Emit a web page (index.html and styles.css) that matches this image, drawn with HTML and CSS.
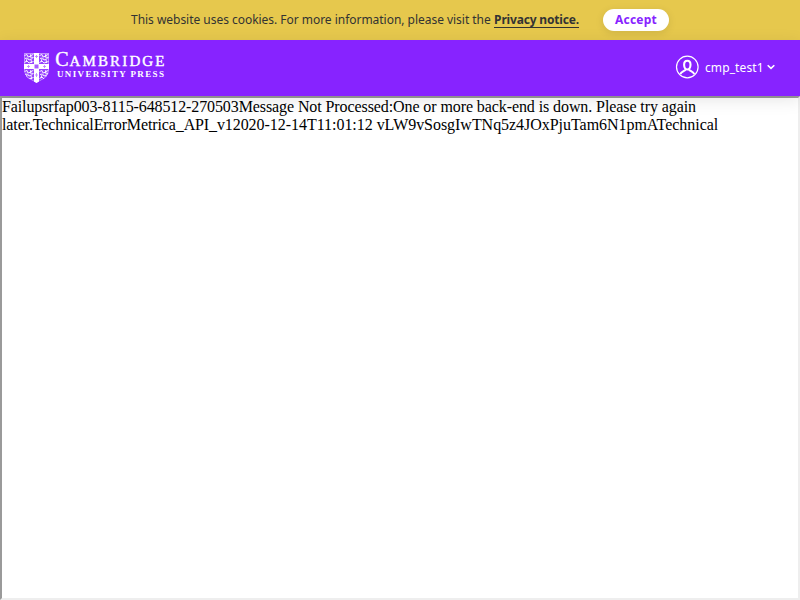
FILE: index.html
```html
<!DOCTYPE html>
<html lang="en">
<head>
<meta charset="utf-8">
<title>Cambridge University Press</title>
<link rel="stylesheet" href="styles.css">
</head>
<body>
<div class="cookie">
  <p class="cookie-text"><span class="cookie-copy">This website uses cookies. For more information, please visit the</span> <a class="notice">Privacy notice.</a></p>
  <button class="accept">Accept</button>
</div>
<header class="header">
  <svg class="logo" width="142" height="40" viewBox="0 -4 142 40">
    <defs>
      <clipPath id="shield"><path d="M0 1H25V18C25 25 18 28 12.5 31C7 28 0 25 0 18Z"/></clipPath>
      <g id="lion" fill="none" stroke="#fff" stroke-width=".9">
        <path d="M.5 2.5L3 1.5L4 4L7 3L9.5 1M1 5.5L3.5 5L5 7L8.5 5.5M.5 9.5L3 8L5 10L9.5 8.500M7 1L6 4L9.500 4.500M3 6L2 9M7 6.500L7.500 10"/>
      </g>
    </defs>
    <g clip-path="url(#shield)">
      <rect width="25" height="32" fill="#fff" opacity=".15"/>
      <use href="#lion" y="1"/><use href="#lion" x="15" y="1"/>
      <use href="#lion" y="17"/><use href="#lion" x="15" y="17"/>
      <path d="M10 0H15V12H25V17H15V32H10V17H0V12H10Z" fill="#fff"/>
      <path d="M12.500 3V6M11 4.500H14M12.500 21V25M11 23H14M3 14.500H6M4.500 13V16M19 14.500H22M20.500 13V16" stroke="#b77aff" stroke-width=".8"/>
      <rect x="10.500" y="12.500" width="4" height="4" fill="#a75cff"/>
      <path d="M.5 1.500H24.500V18C24.500 25 18 27.500 12.500 30.500C7 27.500 .5 25 .5 18Z" fill="none" stroke="#fff" stroke-width=".4"/>
    </g>
    <text class="logo-text" y="14.300"><tspan class="logo-cap" x="31.200">C</tspan><tspan class="logo-main" x="45.500" textLength="95" lengthAdjust="spacing">AMBRIDGE</tspan></text>
    <text class="logo-text logo-sub" x="33" y="25" textLength="107" lengthAdjust="spacing">UNIVERSITY PRESS</text>
  </svg>
  <div class="user">
    <svg width="24" height="24" viewBox="0 0 24 24" fill="none" stroke="#fff">
      <circle cx="12.300" cy="12" r="10.800" stroke-width="1.200"/>
      <path d="M12.300 5.800C10.200 5.800 9.100 7.500 9.100 9.800C9.100 12.200 10.500 14.500 12.300 14.500S15.500 12.200 15.500 9.800C15.500 7.500 14.400 5.800 12.300 5.800Z" stroke-width="2.100"/>
      <path d="M5.300 19.300C6.100 16.900 8.500 16.500 10.700 14.800M19.300 19.300C18.500 16.900 16.100 16.500 13.900 14.800" stroke-width="2"/>
    </svg>
    <span class="user-name">cmp_test1</span>
    <svg class="chevron" width="8" height="6" viewBox="0 0 8 6" fill="none" stroke="#fff" stroke-width="1.600"><path d="M.7 1.200L4 4.400L7.300 1.200"/></svg>
  </div>
</header>
<main class="frame"><span class="id">Failupsrfap003-8115-648512-270503</span><span class="message">Message Not Processed:One or more back-end is down. Please try again</span> <span class="error">later.TechnicalErrorMetrica_API_v1</span><span class="detail">2020-12-14T11:01:12 vLW9vSosgIwTNq5z4JOxPjuTam6N1pmATechnical</span></main>
</body>
</html>
```
FILE: styles.css
```css
* { box-sizing: border-box; }
body {
  margin: 0;
  height: 600px;
  display: flex;
  flex-direction: column;
  overflow: hidden;
  background: #fff;
  font-family: "Noto Sans", sans-serif;
}
.cookie {
  height: 40px;
  flex: none;
  display: flex;
  align-items: center;
  justify-content: center;
  gap: 24px;
  background: #e6c84d;
  color: #333;
}
.cookie-text {
  margin: 0;
  width: 448px;
  display: flex;
  justify-content: space-between;
  font-size: 12px;
  line-height: 15px;
  white-space: nowrap;
}
.cookie-copy { letter-spacing: -0.03px; }
.notice {
  font-weight: 700;
  letter-spacing: -0.17px;
  border-bottom: 1px solid #333;
}
.accept {
  width: 66px;
  height: 22px;
  padding: 0;
  border: 0;
  border-radius: 11px;
  background: #fff;
  color: #8723ff;
  font: 700 12px/22px "Noto Sans", sans-serif;
  letter-spacing: 0.2px;
  box-shadow: 0 2px 8px rgba(0, 0, 0, .1);
}
.header {
  position: relative;
  z-index: 1;
  height: 56px;
  flex: none;
  display: flex;
  align-items: center;
  justify-content: space-between;
  padding: 0 25px 0 24px;
  background: #8723ff;
  box-shadow: 0 4px 16px rgba(0, 0, 0, .1);
}
.logo-text {
  font-family: "Liberation Serif", serif;
  fill: #fff;
  stroke: #fff;
  stroke-width: .4px;
}
.logo { overflow: visible; }
.logo-cap { font-size: 20px; }
.logo-main { font-size: 15px; }
.logo-sub {
  font-size: 9px;
  font-weight: 700;
  stroke: none;
}
.user {
  display: flex;
  align-items: center;
  color: #fff;
  font-size: 12px;
  padding-bottom: 2px;
}
.user-name {
  width: 58px;
  margin: 0 4px 0 6px;
  white-space: nowrap;
  letter-spacing: 0.1px;
}
.frame {
  flex: 1;
  border: 2px solid;
  border-color: #9a9a9a #eee #eee #9a9a9a;
  font: 16px/18px "Liberation Serif", serif;
  color: #000;
}
.id { letter-spacing: -0.11px; }
.message { letter-spacing: -0.09px; }
.error { letter-spacing: -0.12px; }
.detail { letter-spacing: -0.04px; }
```
